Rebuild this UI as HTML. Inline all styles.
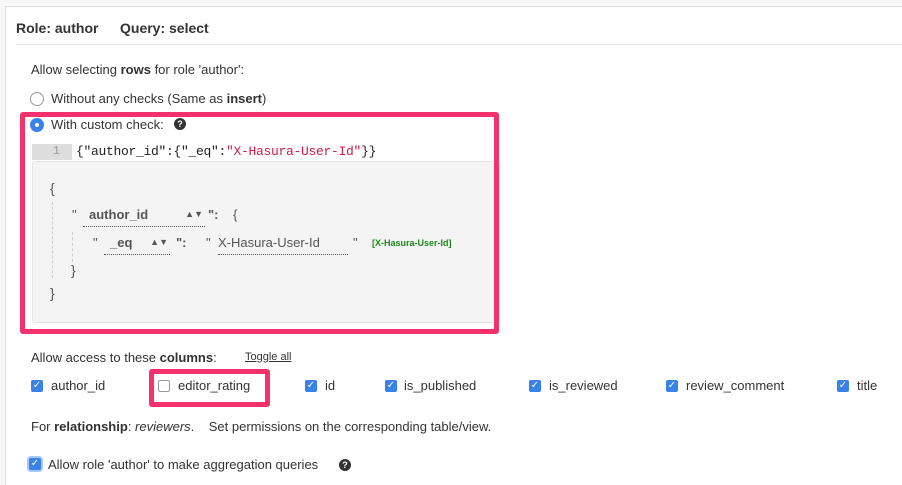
<!DOCTYPE html>
<html><head><style>
*{margin:0;padding:0;box-sizing:border-box}
html,body{width:902px;height:485px;overflow:hidden}
body{background:#f7f7f7;font-family:"Liberation Sans",sans-serif;color:#333;position:relative}
.a{position:absolute;white-space:nowrap}
.card{position:absolute;left:5px;top:6px;width:897px;height:479px;background:#fff;border:1px solid #ddd;border-right:none;border-bottom:none}
.t{font-size:13px}
.pink{position:absolute;border:5px solid #f4306d;border-radius:3px}
.cb{position:absolute;width:12px;height:12px;background:#3b82e8;border-radius:2px;color:#fff;font-size:10px;line-height:12px;text-align:center}
.mono{font-family:"Liberation Mono",monospace}
.dot{border-bottom:1px dotted #555}
</style></head><body>
<div class="card"></div>
<div class="a" style="left:16px;top:20px;font-size:14px;font-weight:bold;color:#333">Role: author</div>
<div class="a" style="left:120px;top:20px;font-size:14px;font-weight:bold;color:#333">Query: select</div>
<div class="a" style="left:16px;top:44px;width:886px;height:1px;background:#e5e5e5"></div>
<div class="a t" style="left:31px;top:62px">Allow selecting <b>rows</b> for role 'author':</div>
<div class="a" style="left:30px;top:92px;width:14px;height:14px;border:1px solid #999;border-radius:50%;background:#fff"></div>
<div class="a t" style="left:51px;top:91px">Without any checks (Same as <b>insert</b>)</div>
<div class="a" style="left:30px;top:118px;width:14px;height:14px;border-radius:50%;background:#3b82e8"><div style="margin:5px;width:4px;height:4px;border-radius:50%;background:#fff"></div></div>
<div class="a t" style="left:51px;top:117px">With custom check:</div>
<div class="a" style="left:174px;top:118px;width:12px;height:12px;border-radius:50%;background:#333;color:#fff;font-size:9px;font-weight:bold;line-height:12px;text-align:center">?</div>
<div class="a mono" style="left:32px;top:144px;width:40px;height:16px;background:#ddd;color:#999;font-size:12px;text-align:right;padding-right:12px">1</div>
<div class="a mono" style="left:76px;top:144px;font-size:13px;color:#222;letter-spacing:-0.3px">{"author_id":{"_eq":<span style="color:#d11a4a">"X-Hasura-User-Id"</span>}}</div>
<div class="a" style="left:32px;top:161px;width:468px;height:162px;background:#f4f4f4;border:1px solid #e4e4e4;border-radius:3px"></div>
<div class="a" style="left:50px;top:180px;font-size:14px;color:#555">{</div>
<div class="a" style="left:52px;top:202px;height:76px;border-left:1px dashed #ccc"></div>
<div class="a" style="left:72px;top:207px;font-size:13px;color:#555">"</div>
<div class="a dot" style="left:83px;top:207px;width:122px;height:20px;font-size:13px;font-weight:bold;color:#555;padding-left:6px">author_id<span style="position:absolute;right:2px;font-size:9px;top:2px">▲▼</span></div>
<div class="a" style="left:208px;top:207px;font-size:13px;color:#555;font-weight:bold">":&nbsp;&nbsp;&nbsp; <span style="font-weight:normal">{</span></div>
<div class="a" style="left:72px;top:232px;height:30px;border-left:1px dashed #ccc"></div>
<div class="a" style="left:93px;top:235px;font-size:13px;color:#555">"</div>
<div class="a dot" style="left:104px;top:235px;width:66px;height:20px;font-size:13px;font-weight:bold;color:#555;padding-left:6px">_eq<span style="position:absolute;right:2px;font-size:9px;top:2px">▲▼</span></div>
<div class="a" style="left:176px;top:235px;font-size:13px;color:#555;font-weight:bold">":</div>
<div class="a" style="left:206px;top:235px;font-size:13px;color:#555">"</div>
<div class="a dot" style="left:218px;top:235px;width:130px;height:20px;font-size:13px;color:#555">X-Hasura-User-Id</div>
<div class="a" style="left:353px;top:235px;font-size:13px;color:#555">"</div>
<div class="a" style="left:372px;top:238px;font-size:9px;font-weight:bold;color:#1a8a1a">[X-Hasura-User-Id]</div>
<div class="a" style="left:71px;top:262px;font-size:14px;color:#555">}</div>
<div class="a" style="left:50px;top:285px;font-size:14px;color:#555">}</div>
<div class="pink" style="left:20px;top:112px;width:479px;height:222px"></div>
<div class="a t" style="left:31px;top:350px">Allow access to these <b>columns</b>:</div>
<div class="a" style="left:245px;top:351px;font-size:11px;text-decoration:underline">Toggle all</div>
<div class="cb" style="left:31px;top:380px">✓</div><div class="a t" style="left:51px;top:378px">author_id</div>
<div class="pink" style="left:149px;top:369px;width:121px;height:38px"></div>
<div class="a" style="left:158px;top:380px;width:12px;height:12px;border:1px solid #999;border-radius:2px;background:#fff"></div><div class="a t" style="left:178px;top:378px">editor_rating</div>
<div class="cb" style="left:305px;top:380px">✓</div><div class="a t" style="left:325px;top:378px">id</div>
<div class="cb" style="left:385px;top:380px">✓</div><div class="a t" style="left:404px;top:378px">is_published</div>
<div class="cb" style="left:529px;top:380px">✓</div><div class="a t" style="left:549px;top:378px">is_reviewed</div>
<div class="cb" style="left:666px;top:380px">✓</div><div class="a t" style="left:686px;top:378px">review_comment</div>
<div class="cb" style="left:837px;top:380px">✓</div><div class="a t" style="left:857px;top:378px">title</div>
<div class="a t" style="left:31px;top:419px">For <b>relationship</b>: <i>reviewers</i>.&nbsp;&nbsp;&nbsp; Set permissions on the corresponding table/view.</div>
<div class="cb" style="left:29px;top:458px;box-shadow:0 0 0 2px #a9c8f5">✓</div>
<div class="a t" style="left:48px;top:457px">Allow role 'author' to make aggregation queries</div>
<div class="a" style="left:339px;top:459px;width:12px;height:12px;border-radius:50%;background:#333;color:#fff;font-size:9px;font-weight:bold;line-height:12px;text-align:center">?</div>
</body></html>
